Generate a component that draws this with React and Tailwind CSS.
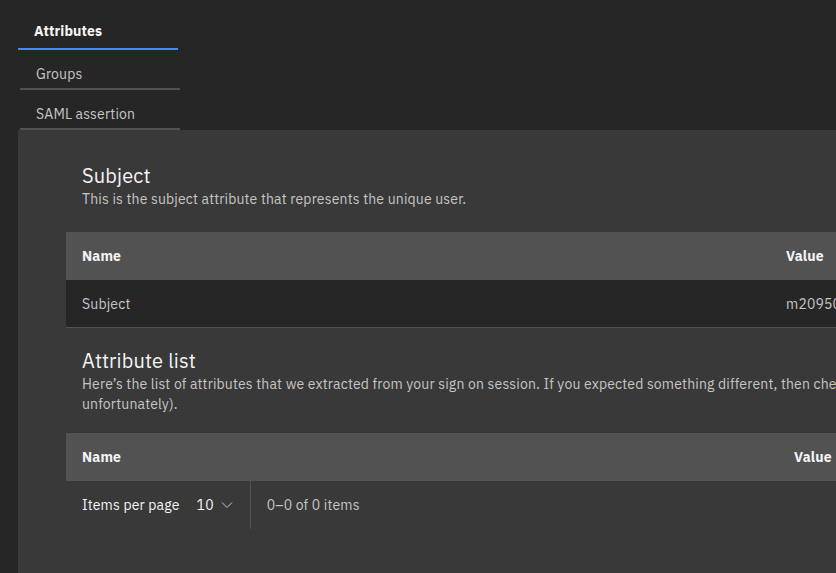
function ChevronDown() {
  return (
    <svg width="16" height="16" viewBox="0 0 16 16" fill="none" className="text-[#c6c6c6]">
      <path d="M3 5.5l5 5 5-5" stroke="currentColor" strokeWidth="1" />
    </svg>
  );
}

function Tab({ label, active }) {
  if (active) {
    return (
      <div className="w-[160px] h-[42px] pl-4 pt-[13px] border-b-2 border-[#4589ff] text-sm font-bold text-[#f4f4f4]">
        {label}
      </div>
    );
  }
  return (
    <div className="ml-[2px] w-[160px] h-[40px] pl-4 pt-[14px] border-b-2 border-[#525252] text-sm text-[#c6c6c6]">
      {label}
    </div>
  );
}

function Heading({ title, children }) {
  return (
    <div className="px-4">
      <h2 className="text-[20px] leading-[26px] text-[#f4f4f4]">{title}</h2>
      <p className="text-sm leading-5 text-[#c6c6c6]">{children}</p>
    </div>
  );
}

function HeaderRow({ nameWidth }) {
  return (
    <div className="flex h-12 items-center bg-[#525252] text-sm font-bold text-[#f4f4f4]">
      <div className="px-4" style={{ width: nameWidth }}>
        Name
      </div>
      <div className="px-4">Value</div>
    </div>
  );
}

export default function App() {
  return (
    <div
      className="w-[836px] h-[573px] overflow-hidden bg-[#262626] tracking-[0.16px]"
      style={{ fontFamily: "'IBM Plex Sans', 'Liberation Sans', Arial, sans-serif" }}
    >
      <div className="pt-[8px] pl-[18px]">
        <Tab label="Attributes" active />
        <Tab label="Groups" />
        <Tab label="SAML assertion" />
      </div>

      <div className="ml-[18px] w-[1400px] h-[443px] bg-[#393939] pt-[33px] px-12">
        <Heading title="Subject">This is the subject attribute that represents the unique user.</Heading>

        <div className="mt-[23px]">
          <HeaderRow nameWidth={704} />
          <div className="flex h-12 items-center bg-[#262626] border-b border-[#525252] text-sm text-[#c6c6c6]">
            <div className="w-[704px] px-4">Subject</div>
            <div className="px-4">m20950a8c1</div>
          </div>
        </div>

        <div className="mt-[20px]">
          <Heading title="Attribute list">
            <span className="whitespace-nowrap">
              Here’s the list of attributes that we extracted from your sign on session. If you expected
              something different, then check your identity provider configuration (the claims are case
              sensitive,
            </span>
            <br />
            unfortunately).
          </Heading>
        </div>

        <div className="mt-[19px]">
          <HeaderRow nameWidth={712} />
          <div className="flex h-12 items-center text-sm text-[#f4f4f4]">
            <div className="flex items-center h-full pl-4 pr-[15px] border-r border-[#525252]">
              <span>Items per page</span>
              <span className="ml-[17px]">10</span>
              <span className="ml-[5px]">
                <ChevronDown />
              </span>
            </div>
            <div className="pl-4 text-[#c6c6c6]">0–0 of 0 items</div>
          </div>
        </div>
      </div>
    </div>
  );
}
